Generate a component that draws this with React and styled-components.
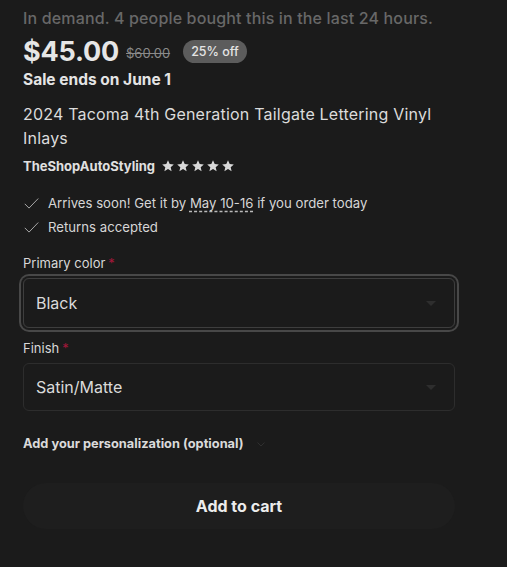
import React from "react";
import styled, { createGlobalStyle } from "styled-components";

const Global = createGlobalStyle`
  html, body {
    margin: 0;
    padding: 0;
    background: #1b1b1b;
  }
  body {
    font-family: "Inter", "Liberation Sans", sans-serif;
    color: #dedede;
  }
`;

const Page = styled.div`
  width: 432px;
  padding: 6px 0 40px 23px;
  display: flex;
  flex-direction: column;
`;

const Demand = styled.p`
  margin: 0;
  font-size: 16px;
  line-height: 25px;
  letter-spacing: 0.15px;
  color: #686868;
  font-weight: 500;
`;

const PriceRow = styled.div`
  display: flex;
  align-items: center;
  margin-top: 5px;
  height: 30px;
`;

const Price = styled.span`
  font-size: 27px;
  font-weight: 700;
  letter-spacing: -0.2px;
  color: #e6e6e6;
`;

const OldPrice = styled.span`
  font-size: 13px;
  color: #8a8a8a;
  text-decoration: line-through;
  margin-left: 7px;
  margin-top: 4px;
`;

const Badge = styled.span`
  margin-left: 13px;
  background: #5c5c5c;
  color: #e4e4e4;
  font-size: 12.5px;
  font-weight: 500;
  padding: 4px 8px;
  border-radius: 13px;
`;

const SaleEnds = styled.p`
  margin: 4px 0 0;
  font-size: 15.5px;
  font-weight: 700;
  line-height: 20px;
  color: #e4e4e4;
`;

const Title = styled.h1`
  margin: 12px 0 0;
  font-size: 16px;
  font-weight: 400;
  line-height: 24px;
  letter-spacing: 0.2px;
  color: #dcdcdc;
`;

const ShopRow = styled.div`
  display: flex;
  align-items: center;
  margin-top: 8px;
  gap: 6px;
`;

const ShopName = styled.span`
  font-size: 13px;
  font-weight: 700;
  color: #e0e0e0;
`;

const Stars = styled.span`
  display: flex;
  gap: 1px;
`;

const Perks = styled.ul`
  list-style: none;
  margin: 19px 0 0;
  padding: 0;
  display: flex;
  flex-direction: column;
  gap: 4px;
`;

const Perk = styled.li`
  display: flex;
  align-items: center;
  gap: 8px;
  font-size: 13.2px;
  line-height: 20px;
  color: #d6d6d6;
`;

const Dashed = styled.span`
  text-decoration: underline dashed #bbb;
  text-underline-offset: 3px;
`;

const Field = styled.div`
  display: flex;
  flex-direction: column;
  margin-top: ${(p) => p.$top}px;
`;

const Label = styled.label`
  font-size: 13px;
  line-height: 20px;
  color: #d8d8d8;
  margin-bottom: 5px;
`;

const Req = styled.span`
  color: #a3173a;
  margin-left: 3px;
`;

const Select = styled.div`
  height: ${(p) => (p.$focused ? 48 : 46)}px;
  border: 1px solid ${(p) => (p.$focused ? "#3e3e3e" : "#2d2d2d")};
  border-radius: 6px;
  display: flex;
  align-items: center;
  justify-content: space-between;
  padding: 0 18px 0 12px;
  font-size: 16px;
  color: #dadada;
  box-shadow: ${(p) =>
    p.$focused ? "0 0 0 2px #1b1b1b, 0 0 0 4px #484848" : "none"};
`;

const Caret = styled.span`
  width: 0;
  height: 0;
  border-left: 5px solid transparent;
  border-right: 5px solid transparent;
  border-top: 5px solid #2e2e2e;
`;

const Personalize = styled.div`
  margin-top: 25px;
  display: flex;
  align-items: center;
  gap: 11px;
  font-size: 12.8px;
  font-weight: 700;
  color: #dadada;
`;

const CartButton = styled.button`
  margin-top: 32px;
  height: 46px;
  border: none;
  border-radius: 23px;
  background: #1e1e1e;
  color: #ececec;
  font-family: inherit;
  font-size: 16px;
  font-weight: 700;
`;

const Check = () => (
  <svg width="17" height="17" viewBox="0 0 24 24" fill="none">
    <path d="M2.5 12.5 L8.5 18.5 L21.5 5" stroke="#a8a8a8" strokeWidth="1.4" />
  </svg>
);

const Star = () => (
  <svg width="14" height="14" viewBox="0 0 24 24">
    <path
      d="M12 2 L14.9 8.6 L22 9.3 L16.6 14 L18.2 21 L12 17.3 L5.8 21 L7.4 14 L2 9.3 L9.1 8.6 Z"
      fill="#d8d8d8"
    />
  </svg>
);

const Chevron = () => (
  <svg width="12" height="12" viewBox="0 0 24 24" fill="none">
    <path d="M5 9 L12 16 L19 9" stroke="#2f2f2f" strokeWidth="2" />
  </svg>
);

export default function App() {
  return (
    <>
      <Global />
      <Page>
        <Demand>In demand. 4 people bought this in the last 24 hours.</Demand>
        <PriceRow>
          <Price>$45.00</Price>
          <OldPrice>$60.00</OldPrice>
          <Badge>25% off</Badge>
        </PriceRow>
        <SaleEnds>Sale ends on June 1</SaleEnds>
        <Title>2024 Tacoma 4th Generation Tailgate Lettering Vinyl Inlays</Title>
        <ShopRow>
          <ShopName>TheShopAutoStyling</ShopName>
          <Stars>
            {[0, 1, 2, 3, 4].map((i) => (
              <Star key={i} />
            ))}
          </Stars>
        </ShopRow>
        <Perks>
          <Perk>
            <Check />
            <span>
              Arrives soon! Get it by <Dashed>May 10-16</Dashed> if you order today
            </span>
          </Perk>
          <Perk>
            <Check />
            <span>Returns accepted</span>
          </Perk>
        </Perks>
        <Field $top={16}>
          <Label>
            Primary color<Req>*</Req>
          </Label>
          <Select $focused>
            <span>Black</span>
            <Caret />
          </Select>
        </Field>
        <Field $top={10}>
          <Label>
            Finish<Req>*</Req>
          </Label>
          <Select>
            <span>Satin/Matte</span>
            <Caret />
          </Select>
        </Field>
        <Personalize>
          Add your personalization (optional)
          <Chevron />
        </Personalize>
        <CartButton>Add to cart</CartButton>
      </Page>
    </>
  );
}
